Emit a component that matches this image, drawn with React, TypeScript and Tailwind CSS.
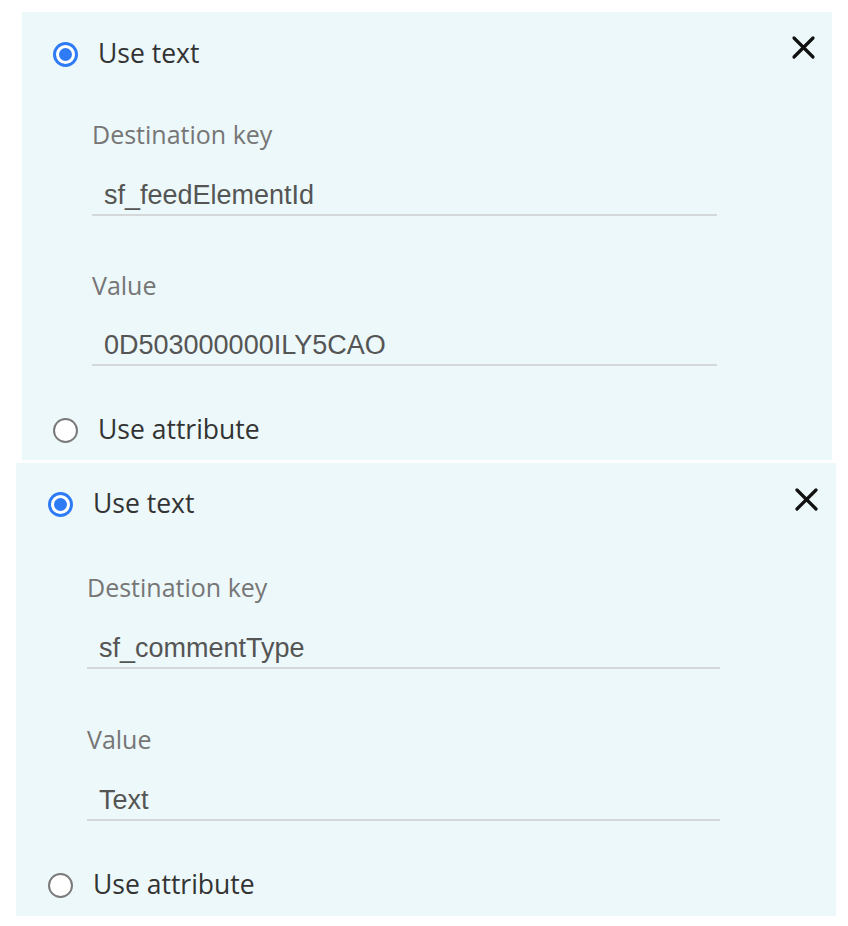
import React from 'react';

function Radio({ checked }: { checked?: boolean }) {
  return checked ? (
    <span className="flex h-[25px] w-[25px] items-center justify-center rounded-full border-[3px] border-[#2f7bf5] bg-white">
      <span className="h-[13px] w-[13px] rounded-full bg-[#2f7bf5]" />
    </span>
  ) : (
    <span className="h-[25px] w-[25px] rounded-full border-2 border-[#7a7a7a] bg-white" />
  );
}

function CloseIcon() {
  return (
    <svg width="25" height="25" viewBox="0 0 25 25" fill="none" stroke="#111" strokeWidth="3.2" strokeLinecap="round">
      <path d="M3 3L22 22M22 3L3 22" />
    </svg>
  );
}

const radioText = "text-[26.5px] text-[#333] font-['Open_Sans',sans-serif]";
const labelText = "text-[25px] text-[#767676] font-['Open_Sans',sans-serif]";
const inputText = "text-[27px] text-[#555] font-['Liberation_Sans',Arial,sans-serif]";

export default function App() {
  return (
    <div className="min-h-[926px] w-[848px] bg-white pt-[12px]">
      {/* first mapping */}
      <div className="ml-[22px] w-[810px]">
        <div className="bg-[#ecf8f9] pb-[10px] pt-[22px]">
          <div className="flex justify-between pr-[16px]">
            <div className="flex h-[40px] items-center gap-[20px] pl-[31px]">
              <Radio checked />
              <span className={radioText}>Use text</span>
            </div>
            <div className="mt-[1px]">
              <CloseIcon />
            </div>
          </div>
          <div className="ml-[70px] w-[625px]">
            <div className={`mt-[46px] flex h-[30px] items-center ${labelText}`}>Destination key</div>
            <div className={`mt-[26px] flex h-[40px] items-center border-b-2 border-[#d4d8d9] pl-[12px] ${inputText}`}>sf_feedElementId</div>
            <div className={`mt-[55px] flex h-[30px] items-center ${labelText}`}>Value</div>
            <div className={`mt-[25px] flex h-[40px] items-center border-b-2 border-[#d4d8d9] pl-[12px] ${inputText}`}>0D503000000ILY5CAO</div>
          </div>
          <div className="mt-[44px] flex h-[40px] items-center gap-[20px] pl-[31px]">
            <Radio />
            <span className={radioText}>Use attribute</span>
          </div>
        </div>
      </div>

      {/* second mapping */}
      <div className="ml-[16px] mt-[3px] w-[820px]">
        <div className="bg-[#ecf8f9] pb-[11px] pt-[21px]">
          <div className="flex justify-between pr-[17px]">
            <div className="flex h-[40px] items-center gap-[20px] pl-[32px]">
              <Radio checked />
              <span className={radioText}>Use text</span>
            </div>
            <div className="mt-[3px]">
              <CloseIcon />
            </div>
          </div>
          <div className="ml-[71px] w-[633px]">
            <div className={`mt-[49px] flex h-[30px] items-center ${labelText}`}>Destination key</div>
            <div className={`mt-[26px] flex h-[40px] items-center border-b-2 border-[#d4d8d9] pl-[12px] ${inputText}`}>sf_commentType</div>
            <div className={`mt-[56px] flex h-[30px] items-center ${labelText}`}>Value</div>
            <div className={`mt-[26px] flex h-[40px] items-center border-b-2 border-[#d4d8d9] pl-[12px] ${inputText}`}>Text</div>
          </div>
          <div className="mt-[44px] flex h-[40px] items-center gap-[20px] pl-[32px]">
            <Radio />
            <span className={radioText}>Use attribute</span>
          </div>
        </div>
      </div>
    </div>
  );
}
